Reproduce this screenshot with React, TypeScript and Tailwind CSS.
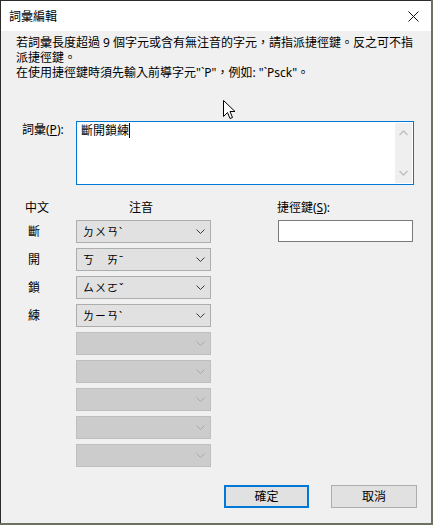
import React from "react";

const FONT = '"Noto Sans", "Noto Sans CJK TC", "Liberation Sans", sans-serif';

function Chevron({ color }: { color: string }) {
  return (
    <svg width="9" height="5" viewBox="0 0 9 5" className="shrink-0">
      <path d="M0.5 0.5 L4.5 4.5 L8.5 0.5" fill="none" stroke={color} strokeWidth="1" />
    </svg>
  );
}

function Sel({ text, disabled }: { text?: string; disabled?: boolean }) {
  return (
    <div
      className={
        disabled
          ? "w-[135px] h-[23px] border border-[#bfbfbf] bg-[#cccccc] flex items-center justify-between pl-[6px] pr-[5px]"
          : "w-[135px] h-[23px] border border-[#adadad] bg-[#e1e1e1] flex items-center justify-between pl-[6px] pr-[5px]"
      }
    >
      <span className="text-[11px] leading-[15px] tracking-[1px] whitespace-pre text-black">{text ?? ""}</span>
      <Chevron color={disabled ? "#a8a8a8" : "#3a3a3a"} />
    </div>
  );
}

export default function App() {
  const rows: { ch: string; zy: string }[] = [
    { ch: "斷", zy: "ㄉㄨㄢˋ" },
    { ch: "開", zy: "ㄎ　ㄞˉ" },
    { ch: "鎖", zy: "ㄙㄨㄛˇ" },
    { ch: "練", zy: "ㄌㄧㄢˋ" },
  ];
  return (
    <div className="w-[433px] h-[525px] bg-[#6c7262] flex items-start">
      <div
        className="relative w-[431px] h-[523px] bg-[#f0f0f0] border-l border-t border-[#2b2b2b] flex flex-col text-[12px] text-black"
        style={{ fontFamily: FONT }}
      >
        {/* title bar */}
        <div className="h-[30px] bg-white flex items-center justify-between pl-[8px] pr-[8px] shrink-0">
          <span className="leading-[15px]">詞彙編輯</span>
          <svg width="11" height="11" viewBox="0 0 11 11" className="mr-[4px]">
            <path d="M0.5 0.5 L10.5 10.5 M10.5 0.5 L0.5 10.5" stroke="#111" strokeWidth="1" />
          </svg>
        </div>

        {/* description */}
        <div className="pt-[4px] pl-[15px] leading-[15px] whitespace-nowrap">
          <div className="h-[15px]">若詞彙長度超過 9 個字元或含有無注音的字元，請指派捷徑鍵。反之可不指</div>
          <div className="h-[15px]">派捷徑鍵。</div>
          <div className="h-[15px]">在使用捷徑鍵時須先輸入前導字元"`P"，例如: "`Psck"。</div>
        </div>

        {/* phrase textarea */}
        <div className="mt-[41px] flex items-start">
          <div className="w-[75px] pl-[21px] leading-[15px] pt-[1px]">
            詞彙(<span className="underline">P</span>):
          </div>
          <div className="w-[338px] h-[64px] border border-[#0078d7] bg-white flex">
            <div className="flex-1 pl-[4px] pt-[1px] flex items-start">
              <span className="leading-[15px] text-[12px]">斷開鎖練</span>
              <span className="w-[1px] h-[15px] bg-black" />
            </div>
            <div className="w-[17px] my-[1px] mr-[1px] bg-[#efefef] flex flex-col items-center justify-between py-[7px]">
              <svg width="9" height="6" viewBox="0 0 9 6">
                <path d="M0.5 5 L4.5 1 L8.5 5" fill="none" stroke="#c0c0c0" strokeWidth="1.5" />
              </svg>
              <svg width="9" height="6" viewBox="0 0 9 6">
                <path d="M0.5 1 L4.5 5 L8.5 1" fill="none" stroke="#c0c0c0" strokeWidth="1.5" />
              </svg>
            </div>
          </div>
        </div>

        {/* lower section */}
        <div className="mt-[15px] flex items-start">
          <div className="flex flex-col">
            <div className="flex leading-[15px] pl-[24px]">
              <span className="w-[104px]">中文</span>
              <span>注音</span>
            </div>
            <div className="mt-[5px] flex flex-col gap-[5px]">
              {rows.map((r) => (
                <div key={r.ch} className="flex items-center">
                  <span className="w-[75px] pl-[27px] leading-[15px]">{r.ch}</span>
                  <Sel text={r.zy} />
                </div>
              ))}
              {[0, 1, 2, 3, 4].map((i) => (
                <div key={i} className="flex items-center">
                  <span className="w-[75px]" />
                  <Sel disabled />
                </div>
              ))}
            </div>
          </div>
          <div className="ml-[66px] flex flex-col">
            <div className="leading-[15px]">
              捷徑鍵(<span className="underline">S</span>):
            </div>
            <div className="mt-[5px] ml-[1px] w-[135px] h-[22px] border border-[#7a7a7a] bg-white" />
          </div>
        </div>

        {/* buttons */}
        <div className="mt-[18px] flex pl-[223px] gap-[22px]">
          <div className="w-[85px] h-[23px] border-2 border-[#0078d7] bg-[#e1e1e1] flex items-center justify-center leading-[15px]">
            確定
          </div>
          <div className="w-[86px] h-[23px] border border-[#adadad] bg-[#e1e1e1] flex items-center justify-center leading-[15px]">
            取消
          </div>
        </div>

        {/* mouse cursor */}
        <svg
          className="absolute left-[222px] top-[99px]"
          width="13"
          height="20"
          viewBox="0 0 13 20"
        >
          <path
            d="M0.5 0.5 L0.5 16.5 L4.5 12.5 L7 18.5 L9.5 17.5 L7 11.5 L12 11.5 Z"
            fill="#ffffff"
            stroke="#000000"
            strokeWidth="1"
            strokeLinejoin="miter"
          />
        </svg>
      </div>
    </div>
  );
}
